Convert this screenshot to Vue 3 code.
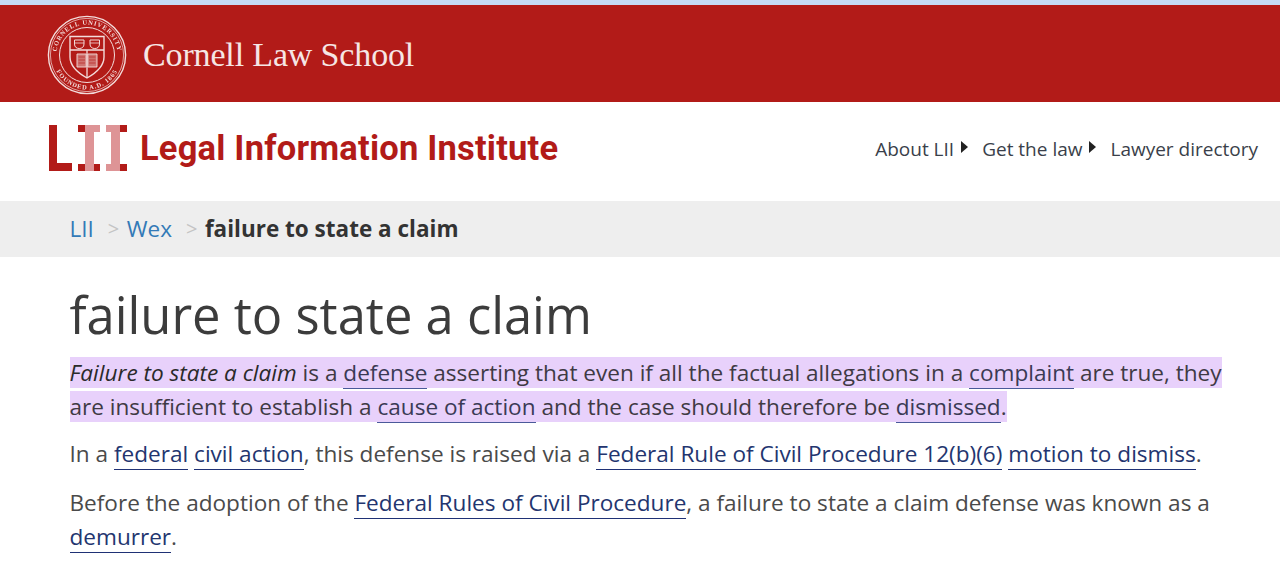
<script setup>
const nav = [
  { label: 'About LII', caret: true },
  { label: 'Get the law', caret: true },
  { label: 'Lawyer directory', caret: false },
]
</script>

<template>
  <div class="page">
    <div class="band"></div>
    <header class="cornell">
      <svg class="seal" viewBox="0 0 80 80" width="80" height="80" aria-hidden="true">
        <defs>
          <path id="arcTop" d="M 9.5 40 A 30.5 30.5 0 0 1 70.5 40" />
          <path id="arcBottom" d="M 5.5 40 A 34.5 34.5 0 0 0 74.5 40" />
          <filter id="soft" x="-5%" y="-5%" width="110%" height="110%"><feGaussianBlur stdDeviation="0.45" /></filter>
        </defs>
        <g filter="url(#soft)" fill="none" stroke="#f3dcdb">
          <circle cx="40" cy="40" r="38.6" stroke-width="1.4" />
          <circle cx="40" cy="40" r="36.6" stroke-width="0.7" />
          <circle cx="40" cy="40" r="27.5" stroke-width="1" />
          <text class="seal-text" fill="#f3dcdb" stroke="none"><textPath href="#arcTop" startOffset="50%" text-anchor="middle">CORNELL UNIVERSITY</textPath></text>
          <text class="seal-text" fill="#f3dcdb" stroke="none"><textPath href="#arcBottom" startOffset="50%" text-anchor="middle">FOUNDED A.D. 1865</textPath></text>
          <path d="M23 21.5 H57 V42 C57 52 49 58 40 63 C31 58 23 52 23 42 Z" stroke-width="1.4" />
          <path d="M23 35 H57 M40 35 V62" stroke-width="1.3" />
          <path d="M27.5 25 H37 V29 C37 32 35 33.5 32.2 33.5 C29.5 33.5 27.5 32 27.5 29 Z M43 25 H52.5 V29 C52.5 32 50.5 33.5 47.8 33.5 C45 33.5 43 32 43 29 Z" stroke-width="1" />
          <path d="M27.5 28 H37 M43 28 H52.5" stroke-width="0.8" />
          <path d="M30 39 H39.2 V52 H30 Z M40.8 39 H50 V52 H40.8 Z" fill="#e8b9b7" fill-opacity=".55" stroke-width="0.9" />
          <path d="M31.5 42 H38 M31.5 45 H38 M31.5 48 H38 M42 42 H48.5 M42 45 H48.5 M42 48 H48.5" stroke-width="0.6" stroke="#b21b18" />
        </g>
      </svg>
      <span class="cornell-name">Cornell Law School</span>
    </header>

    <div class="lii">
      <div class="brand">
        <svg class="lii-mark" viewBox="0 0 78 46" width="78" height="46" aria-hidden="true">
          <g fill="#b21b18">
            <rect x="0" y="0" width="8" height="46" />
            <rect x="0" y="38" width="23" height="8" />
          </g>
          <g fill="#de9496">
            <rect x="29" y="0" width="22" height="7" />
            <rect x="29" y="39" width="22" height="7" />
            <rect x="36" y="0" width="9" height="46" />
            <rect x="57" y="0" width="21" height="7" />
            <rect x="57" y="39" width="21" height="7" />
            <rect x="62" y="0" width="9" height="46" />
          </g>
          <g fill="#b21b18">
            <rect x="29" y="0" width="7" height="7" />
            <rect x="29" y="39" width="7" height="7" />
            <rect x="45" y="39" width="6" height="7" />
            <rect x="71" y="0" width="7" height="7" />
            <rect x="71" y="39" width="7" height="7" />
          </g>
        </svg>
        <span class="lii-name">Legal Information Institute</span>
      </div>
      <nav class="nav">
        <span v-for="item in nav" :key="item.label" class="nav-item">
          {{ item.label }}<i v-if="item.caret" class="caret"></i>
        </span>
      </nav>
    </div>

    <div class="crumbs">
      <a class="crumb">LII</a>
      <span class="sep">&gt;</span>
      <a class="crumb">Wex</a>
      <span class="sep">&gt;</span>
      <strong class="current">failure to state a claim</strong>
    </div>

    <main class="content">
      <h1>failure to state a claim</h1>
      <p class="first"><span class="mark"><em>Failure to state a claim</em> is a <a>defense</a> asserting that even if all the factual allegations in a <a>complaint</a> are true, they are insufficient to establish a <a>cause of action</a> and the case should therefore be <a>dismissed</a>.</span></p>
      <p class="second">In a <a>federal</a> <a>civil action</a>, this defense is raised via a <a>Federal Rule of Civil Procedure 12(b)(6)</a> <a>motion to dismiss</a>.</p>
      <p>Before the adoption of the <a>Federal Rules of Civil Procedure</a>, a failure to state a claim defense was known as a <a>demurrer</a>.</p>
    </main>
  </div>
</template>

<style>
html, body { margin: 0; background: #fff; overflow: hidden; }
</style>

<style scoped>
.page { height: 567px; overflow: hidden; font-family: "Open Sans", sans-serif; color: #4a4a4a; }
.band { height: 5px; background: #c6dbf5; }
.cornell {
  height: 97px; box-sizing: border-box; background: #b21b18; display: flex; align-items: center;
  padding: 2px 0 0 47px; gap: 16px;
}
.seal { flex: none; width: 80px; height: 80px; }
.seal-text { font: 700 6.4px "Liberation Serif", serif; letter-spacing: .9px; }
.cornell-name { font: 34px "Liberation Serif", serif; color: #f6e6e5; letter-spacing: -.15px; }
.lii { height: 99px; display: flex; align-items: center; justify-content: space-between; padding: 0 22px 0 49px; }
.brand { display: flex; align-items: center; gap: 13px; padding-bottom: 7px; }
.lii-mark { flex: none; margin-top: -1px; }
.lii-name { font: 700 34.5px Roboto, sans-serif; color: #b21b18; letter-spacing: .2px; }
.nav { display: flex; gap: 14px; font-size: 19px; color: #3a3f4a; padding-bottom: 6px; }
.nav-item { display: flex; align-items: center; }
.caret { margin-left: 7px; border-left: 7px solid #222; border-top: 6px solid transparent; border-bottom: 6px solid transparent; margin-top: -3px; }
.crumbs {
  height: 56px; box-sizing: border-box; background: #eee; padding: 0 0 1px 69.5px; display: flex; align-items: center;
  font-size: 22.5px;
}
.sep { color: #c4c4c4; margin: 0 7.5px 0 14px; font-size: 20px; }
.current { color: #333; font-weight: 700; }
.content { padding: 0 50px 0 69.5px; }
h1 { margin: 25px 0 0; font-size: 50.7px; font-weight: 400; line-height: 66px; color: #3c3c3c; }
p { margin: 0 0 14px; font-size: 22.58px; line-height: 34px; }
.first { margin: 8px 0 13px; }
.second { margin-bottom: 15px; }
.mark { background: #e8d1fb; color: #3f3a44; }
em { font-style: italic; color: #2a2a2a; }
a { color: #23356f; border-bottom: 1px solid #1f3175; }
.mark a { color: #3a3a55; border-bottom-color: #4a5a9a; }
.crumbs a.crumb { border-bottom: 0; color: #337ab7; }
</style>
